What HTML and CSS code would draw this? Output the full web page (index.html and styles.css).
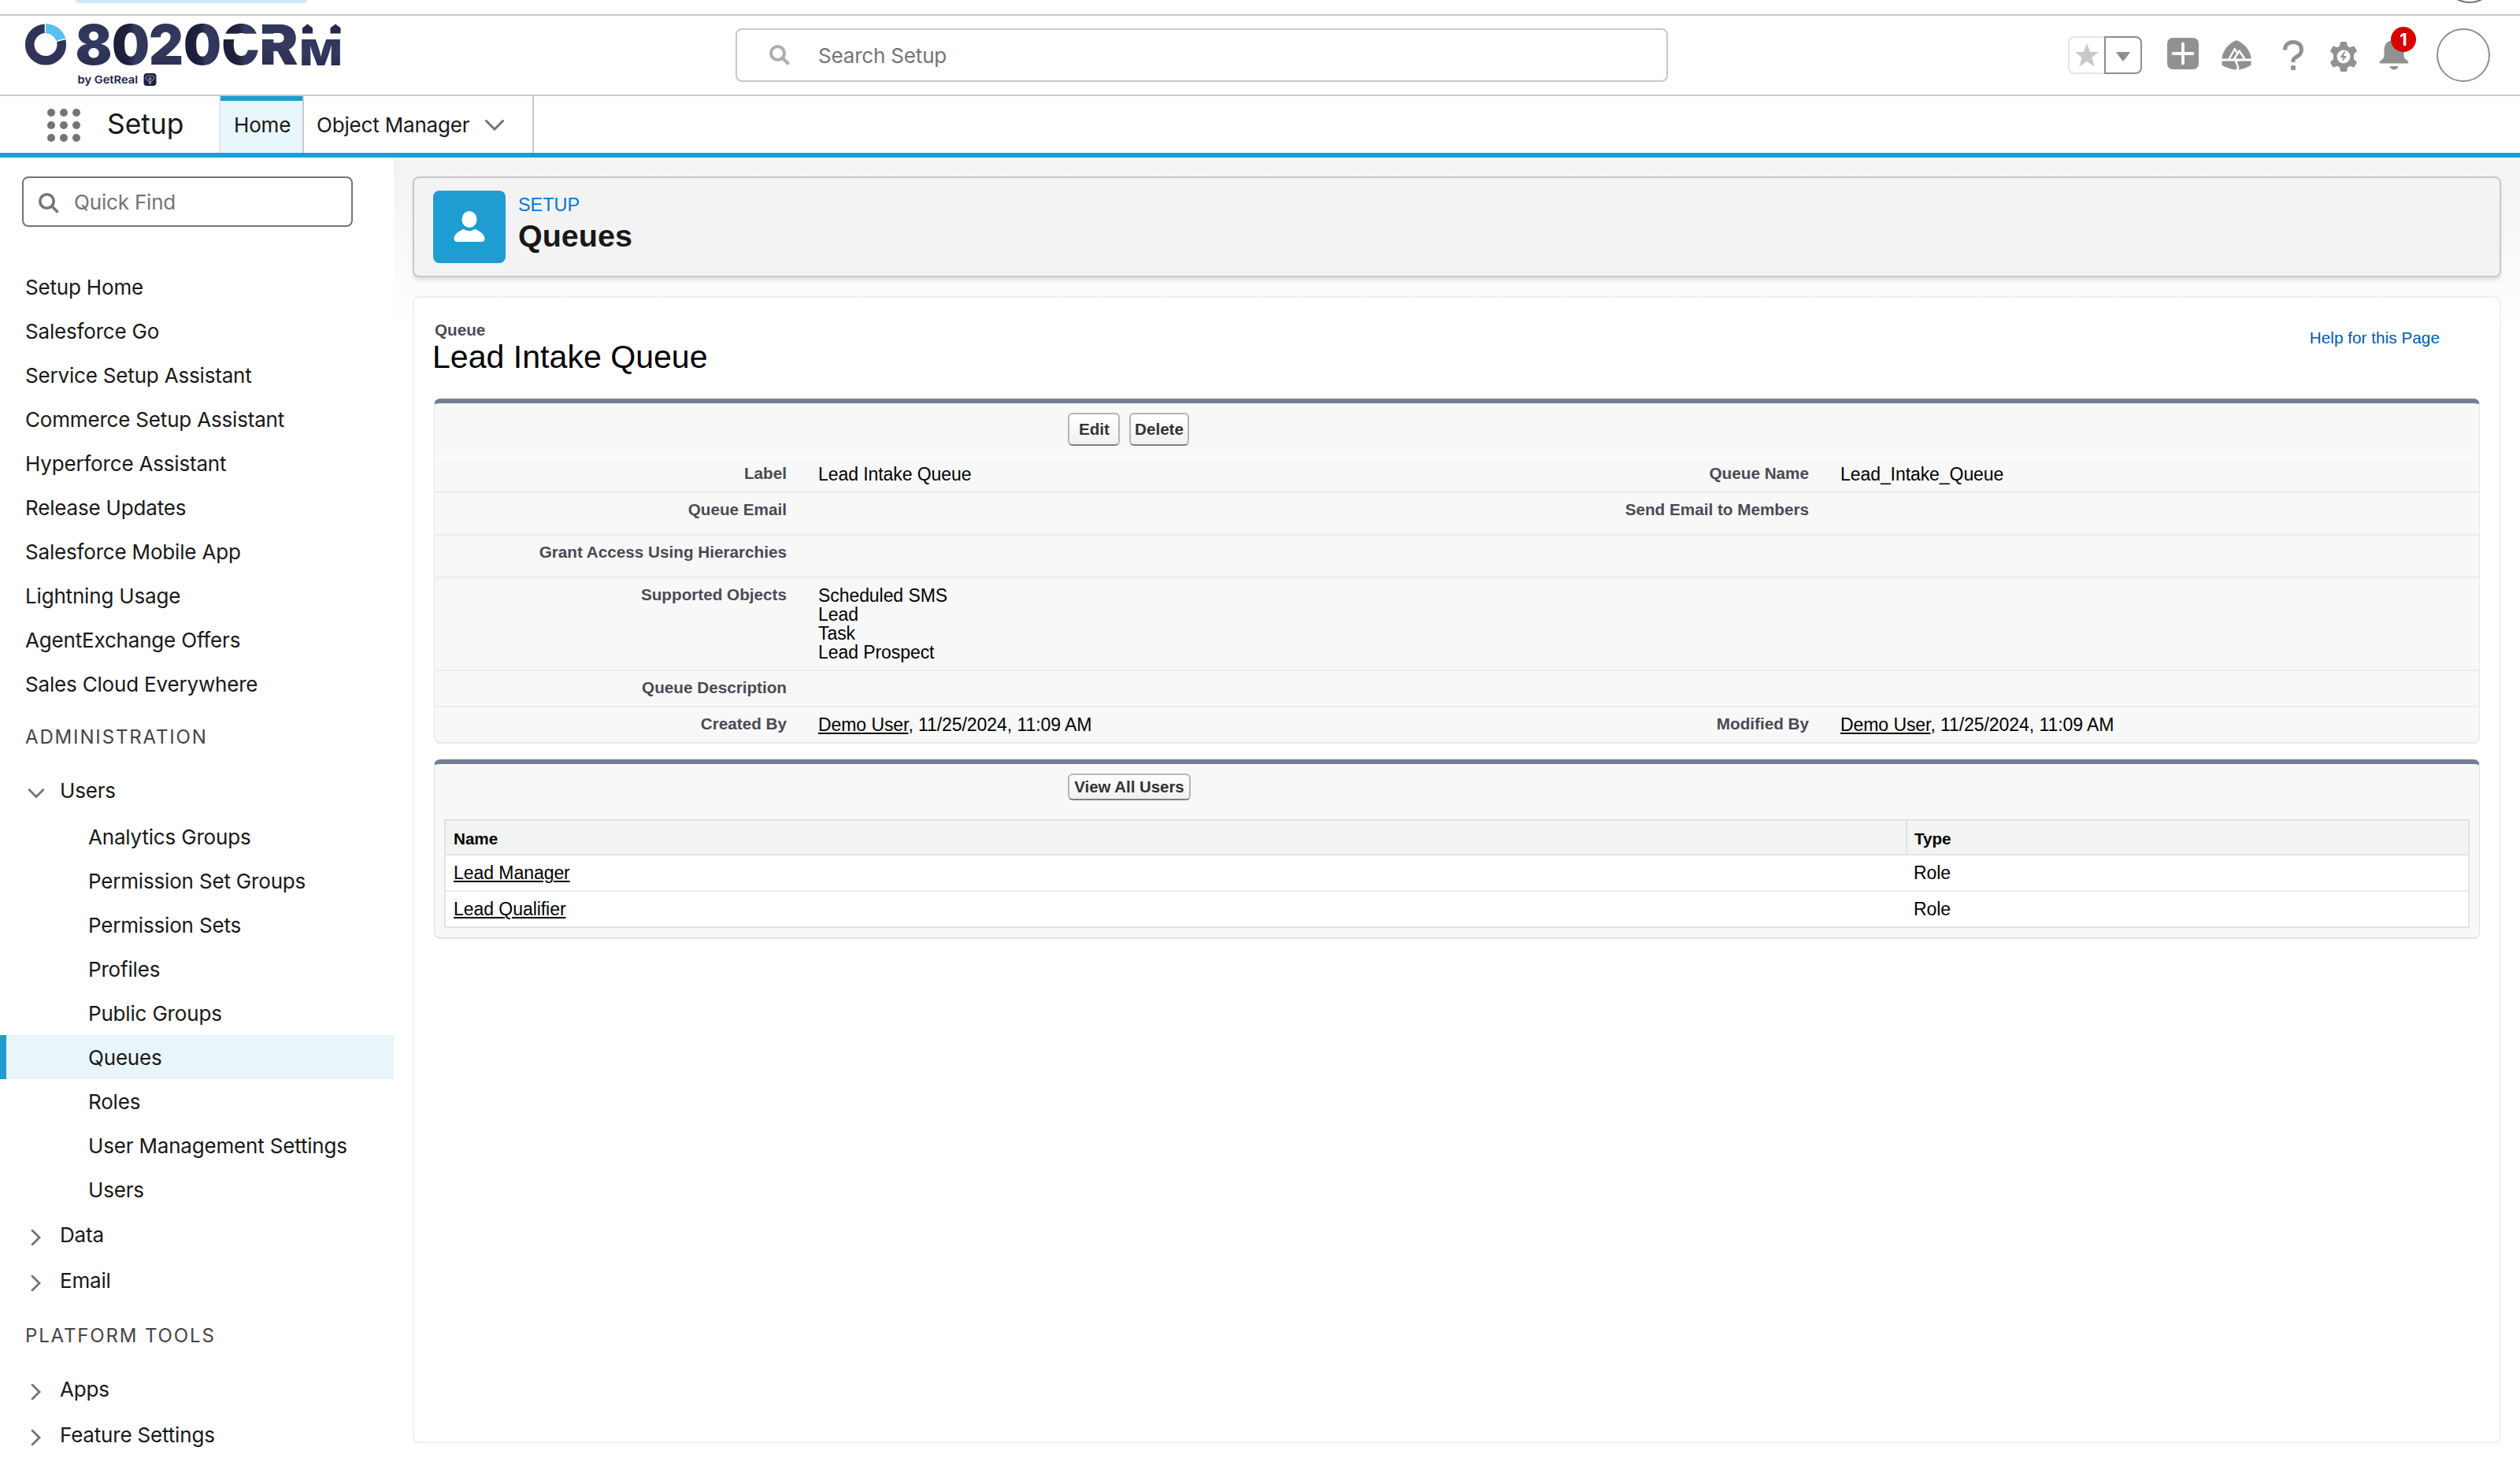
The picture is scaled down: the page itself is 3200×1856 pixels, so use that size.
FILE: index.html
```html
<!DOCTYPE html>
<html lang="en">
<head>
	<meta charset="UTF-8">
	<meta name="viewport" content="width=device-width, initial-scale=1.0">
	<title>Queues | Setup</title>
	<link rel="stylesheet" href="styles.css">
</head>
<body>
	<div class="topstrip">
		<div class="strip-tab"></div>
		<div class="strip-circle"></div>
	</div>

	<header class="global-header">
		<svg class="logo" width="420" height="92" viewBox="20 24 420 92">
			<defs>
				<linearGradient id="navy" x1="0" y1="0" x2="0" y2="1">
					<stop offset="0" stop-color="#2d3256"/>
					<stop offset="0.5" stop-color="#343a60"/>
					<stop offset="1" stop-color="#252946"/>
				</linearGradient>
				<linearGradient id="fold" x1="0" y1="0" x2="1" y2="0">
					<stop offset="0" stop-color="#191d33"/>
					<stop offset="0.45" stop-color="#1f2340"/>
					<stop offset="0.6" stop-color="#343a60"/>
					<stop offset="1" stop-color="#2f3459"/>
				</linearGradient>
			</defs>
			<circle cx="58" cy="56.5" r="20.3" fill="none" stroke="#2f3458" stroke-width="11.6"/>
			<path d="M58 30.4A26.1 26.1 0 0 1 83.2 49.7L72 52.7A14.5 14.5 0 0 0 58 42Z" fill="#56c1f0"/>
			<path d="M57.4 29v14M71 52.6l13.500-3.600" stroke="#fff" stroke-width="1.400"/>
			<g class="logo-text">
				<text x="95.500" y="82.300" textLength="47" lengthAdjust="spacingAndGlyphs" fill="url(#navy)">8</text>
				<text x="142" y="82.300" textLength="48" lengthAdjust="spacingAndGlyphs" fill="url(#fold)">0</text>
				<text x="189" y="82.300" textLength="44" lengthAdjust="spacingAndGlyphs" fill="url(#navy)">2</text>
				<text x="233" y="82.300" textLength="48" lengthAdjust="spacingAndGlyphs" fill="url(#fold)">0</text>
				<text x="281.500" y="82.300" textLength="48" lengthAdjust="spacingAndGlyphs" fill="url(#fold)">C</text>
				<text x="329.500" y="82.300" textLength="49" lengthAdjust="spacingAndGlyphs" fill="url(#navy)">R</text>
			</g>
			<text class="logo-m" x="380.500" y="82.500" textLength="54" lengthAdjust="spacingAndGlyphs" fill="url(#navy)">M</text>
			<path d="M384 42.500v-7l6.500-5 6.500 5v7zM419.500 42.500v-7l6.500-5 6.500 5v7z" fill="#252a49"/>
			<path d="M282 42.800h47v7.200h-47zM332 42.800h18v7.200h-18z" fill="#fff"/>
			<text class="logo-by" x="98.500" y="106" textLength="76.500" lengthAdjust="spacingAndGlyphs">by GetReal</text>
			<rect x="182.500" y="93" width="16" height="16" rx="4" fill="#1d2140"/>
			<path d="M186 97c2-2 4-1 4.500 0 .5-1 2.500-2 4.500 0s0 5-2 5l-2.500 5-2.500-5c-2 0-4-3-2-5zM190.500 98v8M188 100h5" fill="none" stroke="#c3c6d6" stroke-width="0.800"/>
		</svg>

		<div class="global-search">
			<svg width="26" height="26" viewBox="0 0 26 26"><circle cx="10.500" cy="10.500" r="8.500"/><path d="M16.500 16.500l8 8"/></svg>
			<span>Search Setup</span>
		</div>

		<div class="actions">
			<div class="favorites">
				<div class="star"><svg width="30" height="30" viewBox="0 0 30 30"><path d="M15 0l4.200 11H30l-8.600 7 3.200 11.500L15 22.800l-9.600 6.700L8.600 18 0 11h10.800z" fill="#c9c9c9"/></svg></div>
				<div class="caret"><svg width="18" height="12" viewBox="0 0 18 12"><path d="M1 0h16q1 0 .5 1L9.800 11q-.8 1-1.600 0L.5 1Q0 0 1 0z" fill="#8e8e8e"/></svg></div>
			</div>
			<svg class="ico-add" width="40" height="40" viewBox="0 0 40 40">
				<rect width="40" height="40" rx="7" fill="#919191"/>
				<path d="M20 7.500v25M7.500 20h25" stroke="#fff" stroke-width="3.800" stroke-linecap="round"/>
			</svg>
			<svg class="ico-trail" width="38" height="38" viewBox="0 0 38 38">
				<path d="M19 0c8 3 18 12 18.500 23.500H.5C1 12 11 3 19 0z" fill="#919191"/>
				<path d="M.5 26.500h17c-1.500 3.500 4 4.500 1.500 11C11 37 4 34 .5 31.500zM20.500 26.500h17v5c-4 3-9 5-16 6 2.500-5-2.500-7-1-11z" fill="#919191"/>
				<path d="M9.500 24l7.300-13 3.200 5.500M16 24l6.500-10.500L29.500 24" fill="none" stroke="#fff" stroke-width="2.400" stroke-linejoin="round"/>
			</svg>
			<svg class="ico-help" width="26" height="38" viewBox="0 0 26 38">
				<path d="M2.500 12.500C2.500 6 7 2.500 13 2.500S23.500 6 23.500 12s-4 8-7.500 10-3 3-3 6" fill="none" stroke="#919191" stroke-width="5"/>
				<rect x="10" y="32" width="6" height="6" rx="1.500" fill="#919191"/>
			</svg>
			<svg class="ico-gear" width="34" height="38" viewBox="0 0 34 38">
				<path d="M14.500 0h5q1.500 0 1.800 1.500l.7 4 3 1.700 3.800-1.400q1.500-.5 2.200.8l2.500 4.200q.8 1.300-.4 2.300l-3.100 2.700v6.400l3.100 2.700q1.200 1 .4 2.300L31 31.400q-.7 1.300-2.200.8L25 30.800l-3 1.700-.7 4Q21 38 19.500 38h-5q-1.500 0-1.800-1.500l-.7-4-3-1.700-3.800 1.400q-1.500.5-2.200-.8L.5 27.200q-.8-1.300.4-2.300L4 22.200v-6.400L.9 13.100q-1.200-1-.4-2.300L3 6.600q.7-1.300 2.200-.8L9 7.200l3-1.700.7-4Q13 0 14.500 0z" fill="#919191"/>
				<circle cx="17" cy="19" r="8.500" fill="#fff"/>
				<path d="M18 12l-5.500 8h4l-1.500 6 6-8h-4.200l2.700-6z" fill="#919191"/>
			</svg>
			<div class="bell">
				<svg width="38" height="38" viewBox="0 0 38 38">
					<path d="M19 0c8 0 12.500 5 12.500 12.500v5c0 5 1.500 6.500 5 9 1.500 1.200 1 3-.5 3H2c-1.500 0-2-1.800-.5-3 3.500-2.500 5-4 5-9v-5C6.500 5 11 0 19 0zM14.500 33h9c.5 0 1 .5.7 1-1.500 4.500-8.900 4.500-10.400 0-.3-.5.2-1 .7-1z" fill="#919191"/>
				</svg>
				<span class="badge">1</span>
			</div>
			<div class="avatar"></div>
		</div>
	</header>

	<nav class="context-bar">
		<div class="waffle"><i></i><i></i><i></i><i></i><i></i><i></i><i></i><i></i><i></i></div>
		<div class="app-name">Setup</div>
		<a class="tab active">Home</a>
		<a class="tab menu">Object Manager
			<svg width="24" height="14" viewBox="0 0 24 14"><path d="M1.500 1.500L12 12 22.500 1.500"/></svg>
		</a>
	</nav>

	<div class="page">
		<aside class="sidebar">
			<div class="quick-find">
				<svg width="26" height="26" viewBox="0 0 26 26"><circle cx="10.500" cy="10.500" r="8.700"/><path d="M16.500 16.500l8 8"/></svg>
				<span>Quick Find</span>
			</div>
			<ul class="links">
				<li>Setup Home</li>
				<li>Salesforce Go</li>
				<li>Service Setup Assistant</li>
				<li>Commerce Setup Assistant</li>
				<li>Hyperforce Assistant</li>
				<li>Release Updates</li>
				<li>Salesforce Mobile App</li>
				<li>Lightning Usage</li>
				<li>AgentExchange Offers</li>
				<li>Sales Cloud Everywhere</li>
			</ul>
			<h3 class="section">ADMINISTRATION</h3>
			<div class="group open"><svg width="20" height="20" viewBox="0 0 20 20"><path d="M1 5.500l9 9 9-9"/></svg>Users</div>
			<ul class="links sub">
				<li>Analytics Groups</li>
				<li>Permission Set Groups</li>
				<li>Permission Sets</li>
				<li>Profiles</li>
				<li>Public Groups</li>
				<li class="selected">Queues</li>
				<li>Roles</li>
				<li>User Management Settings</li>
				<li>Users</li>
			</ul>
			<div class="group"><svg width="20" height="20" viewBox="0 0 20 20"><path d="M5 1l9 9-9 9"/></svg>Data</div>
			<div class="group"><svg width="20" height="20" viewBox="0 0 20 20"><path d="M5 1l9 9-9 9"/></svg>Email</div>
			<h3 class="section tools">PLATFORM TOOLS</h3>
			<div class="group"><svg width="20" height="20" viewBox="0 0 20 20"><path d="M5 1l9 9-9 9"/></svg>Apps</div>
			<div class="group"><svg width="20" height="20" viewBox="0 0 20 20"><path d="M5 1l9 9-9 9"/></svg>Feature Settings</div>
		</aside>

		<main class="main">
			<div class="page-header">
				<div class="page-icon">
					<svg width="40" height="40" viewBox="0 0 40 40"><ellipse cx="20" cy="10.500" rx="9.500" ry="10.500"/><path d="M13.500 23.200q6.500 4.300 13 0 .8-.5 1.800 0C35 26 39.500 30.500 39.500 35c0 2.500-1.500 4-4 4h-31c-2.500 0-4-1.500-4-4 0-4.500 4.500-9 11.200-11.800q1-.5 1.800 0z"/></svg>
				</div>
				<div>
					<div class="eyebrow">SETUP</div>
					<h1>Queues</h1>
				</div>
			</div>

			<div class="content">
				<div class="title-row">
					<div>
						<div class="type">Queue</div>
						<h2>Lead Intake Queue</h2>
					</div>
					<a class="help">Help for this Page</a>
				</div>

				<section class="panel detail">
					<div class="buttons">
						<button class="btn edit">Edit</button>
						<button class="btn delete">Delete</button>
					</div>
					<div class="row">
						<div class="label">Label</div><div class="value">Lead Intake Queue</div>
						<div class="label">Queue Name</div><div class="value">Lead_Intake_Queue</div>
					</div>
					<div class="row tall">
						<div class="label">Queue Email</div><div class="value"></div>
						<div class="label">Send Email to Members</div><div class="value"></div>
					</div>
					<div class="row tall">
						<div class="label">Grant Access Using Hierarchies</div><div class="value"></div>
					</div>
					<div class="row">
						<div class="label">Supported Objects</div>
						<div class="value">Scheduled SMS<br>Lead<br>Task<br>Lead Prospect</div>
					</div>
					<div class="row">
						<div class="label">Queue Description</div><div class="value"></div>
					</div>
					<div class="row">
						<div class="label">Created By</div><div class="value"><a>Demo User</a>, 11/25/2024, 11:09 AM</div>
						<div class="label">Modified By</div><div class="value"><a>Demo User</a>, 11/25/2024, 11:09 AM</div>
					</div>
				</section>

				<section class="panel related">
					<div class="buttons">
						<button class="btn view">View All Users</button>
					</div>
					<table>
						<thead>
							<tr><th class="name">Name</th><th>Type</th></tr>
						</thead>
						<tbody>
							<tr><td><a>Lead Manager</a></td><td class="role">Role</td></tr>
							<tr><td><a>Lead Qualifier</a></td><td class="role">Role</td></tr>
						</tbody>
					</table>
				</section>
			</div>
		</main>
	</div>
</body>
</html>
```
FILE: styles.css
```css
*{
	box-sizing:border-box;
}
body{
	margin:0;
	width:3200px;
	height:1856px;
	overflow:hidden;
	display:flex;
	flex-direction:column;
	background:#fff;
	color:#181818;
	font:26px/1.5 Inter,"Liberation Sans",sans-serif;
	letter-spacing:-0.18px;
}
ul,h1,h2,h3{
	margin:0;
	padding:0;
	list-style:none;
	font-weight:400;
}
svg{
	display:block;
	flex:none;
}

/* bottom edge of the browser toolbar */
.topstrip{
	flex:none;
	height:20px;
	display:flex;
	justify-content:space-between;
	align-items:flex-start;
	padding:0 30px 0 96px;
	border-bottom:2px solid #c9c9c9;
	overflow:hidden;
}
.strip-tab{
	width:294px;
	height:4px;
	background:#cfe9fe;
	border-radius:0 0 4px 4px;
}
.strip-circle{
	width:68px;
	height:68px;
	margin-top:-64px;
	border:2px solid #747474;
	border-radius:50%;
}

/* global header */
.global-header{
	flex:none;
	height:102px;
	display:flex;
	align-items:flex-start;
	padding:0 38px 0 20px;
	border-bottom:2px solid #c9c9c9;
}
.logo{
	margin-top:4px;
	overflow:visible;
}
.logo-text,.logo-m{
	font-family:Inter,sans-serif;
	font-weight:900;
	font-size:70px;
	letter-spacing:0;
}
.logo-m{
	font-size:45px;
}
.logo-by{
	font-family:Inter,sans-serif;
	font-weight:600;
	font-size:13.5px;
	fill:#1d2140;
	letter-spacing:0;
}
.global-search{
	width:1184px;
	height:68px;
	margin:16px 0 0 494px;
	padding-left:41px;
	display:flex;
	align-items:center;
	border:2px solid #c9c9c9;
	border-radius:8px;
	color:#747474;
}
.global-search svg{
	margin-right:36px;
	fill:none;
	stroke:#aeaeae;
	stroke-width:4;
}
.actions{
	flex:1;
	display:flex;
	justify-content:flex-end;
	align-items:flex-start;
}
.favorites{
	display:flex;
	margin:26px 32px 0 0;
}
.star,.caret{
	height:48px;
	display:flex;
	align-items:center;
	justify-content:center;
}
.star{
	width:46px;
	border:2px solid #e5e5e5;
	border-right:0;
	border-radius:8px 0 0 8px;
}
.caret{
	width:48px;
	padding-top:3px;
	border:2px solid #8e8e8e;
	border-radius:0 8px 8px 0;
}
.ico-add{
	margin:28px 29px 0 0;
}
.ico-trail{
	margin:31px 40px 0 0;
}
.ico-help{
	margin:31px 34px 0 0;
}
.ico-gear{
	margin:33px 28px 0 0;
}
.bell{
	position:relative;
	margin:31px 35px 0 0;
}
.badge{
	position:absolute;
	left:15px;
	top:-17px;
	width:32px;
	height:32px;
	border-radius:50%;
	background:#d80000;
	color:#fff;
	font-size:22px;
	font-weight:700;
	line-height:33px;
	text-align:center;
}
.avatar{
	width:68px;
	height:68px;
	margin-top:16px;
	border:2px solid #8e8e8e;
	border-radius:50%;
}

/* app navigation */
.context-bar{
	flex:none;
	height:78px;
	display:flex;
	align-items:stretch;
	border-bottom:6px solid #1f9dd3;
}
.waffle{
	display:grid;
	grid-template-columns:repeat(3,10px);
	gap:6px;
	width:42px;
	height:42px;
	margin:16px 34px 0 60px;
}
.waffle i{
	width:10px;
	height:10px;
	border-radius:50%;
	background:#747474;
}
.app-name{
	width:142px;
	font-size:35.3px;
	line-height:71px;
	letter-spacing:0;
}
.tab{
	display:flex;
	align-items:center;
	line-height:30px;
	padding:2px 16px 0;
}
.tab.active{
	width:108px;
	padding:2px 0 0 17px;
	background:#e8f5fb;
	border-left:2px solid #e5e5e5;
	border-right:2px solid #c9c9c9;
	box-shadow:inset 0 6px 0 #1f9dd3;
}
.tab.menu{
	width:292px;
	border-right:2px solid #c9c9c9;
}
.tab.menu svg{
	margin-left:20px;
	fill:none;
	stroke:#747474;
	stroke-width:3;
	stroke-linecap:round;
}

/* page */
.page{
	flex:1;
	display:grid;
	grid-template-columns:500px 1fr;
	min-height:0;
}
.sidebar{
	padding-top:24px;
}
.quick-find{
	display:flex;
	align-items:center;
	width:420px;
	height:64px;
	margin:0 0 48px 28px;
	padding-left:19px;
	border:2px solid #747474;
	border-radius:8px;
	color:#747474;
}
.quick-find svg{
	margin:4px 19px 0 0;
	fill:none;
	stroke:#747474;
	stroke-width:3.6;
}
.links li{
	height:56px;
	line-height:58px;
	padding-left:32px;
}
.links.sub li{
	padding-left:112px;
}
.links.sub .selected{
	padding-left:104px;
	border-left:8px solid #1f9dd3;
	background:#e8f5fb;
}
.section{
	height:78px;
	line-height:80px;
	padding-left:32px;
	font-size:24px;
	letter-spacing:1.85px;
	color:#444;
}
.section.tools{
	height:80px;
	line-height:83px;
}
.group{
	display:flex;
	align-items:center;
	height:58px;
	padding-left:36px;
}
.group.open{
	margin-bottom:2px;
}
.group svg{
	margin:8px 20px 0 0;
	fill:none;
	stroke:#747474;
	stroke-width:2.8;
	stroke-linecap:round;
}
.main{
	padding:24px 24px 24px;
	display:flex;
	flex-direction:column;
	background:linear-gradient(#f3f3f3,#fff 220px);
	font-family:"Liberation Sans",Arial,sans-serif;
	letter-spacing:0;
}
.page-header{
	flex:none;
	display:flex;
	height:128px;
	padding:16px 24px;
	border:2px solid #c9c9c9;
	border-radius:8px;
	background:#f3f3f3;
	box-shadow:0 4px 4px rgba(0,0,0,.1);
}
.page-icon{
	display:flex;
	align-items:center;
	justify-content:center;
	width:92px;
	height:92px;
	margin-right:16px;
	border-radius:8px;
	background:#1f9dd3;
	fill:#fff;
}
.eyebrow{
	margin:4px 0 1px;
	font-size:23.4px;
	line-height:28px;
	color:#0176d3;
}
h1{
	font-size:39.5px;
	font-weight:700;
	line-height:48px;
}
.content{
	height:1456px;
	margin-top:24px;
	padding:28px 25px 0;
	border:2px solid #f0f0f0;
	border-radius:8px;
	background:#fff;
	color:#000;
	font-size:23px;
	line-height:24px;
}
.title-row{
	display:flex;
	justify-content:space-between;
	margin-bottom:31px;
}
.type{
	margin:1px 0 0 1px;
	font-size:20.7px;
	font-weight:700;
	color:#4a4a56;
}
h2{
	margin-left:-2px;
	font-size:41.1px;
	line-height:44px;
}
.help{
	margin:11px 51px 0 0;
	font-size:20.8px;
	color:#015ba7;
}
.panel{
	margin-bottom:20px;
	border:1px solid #e4e6e8;
	border-width:6px 1px 2px;
	border-top-color:#747e96;
	border-radius:8px;
	background:#f8f8f8;
}
.buttons{
	display:flex;
	gap:12px;
	padding-left:804px;
}
.detail .buttons{
	height:68px;
	padding-top:12px;
	border-bottom:2px solid #fff;
}
.btn{
	padding:0;
	border:2px solid #b5b5b5;
	border-bottom-color:#7f7f7f;
	border-radius:6px;
	background:linear-gradient(#fff,#f0f0f0);
	color:#333;
	font:bold 20.6px "Liberation Sans",Arial,sans-serif;
}
.edit{
	width:66px;
	height:42px;
	padding-left:1px;
}
.delete{
	width:76px;
	height:42px;
}
.view{
	width:156px;
	height:34px;
	font-size:20.4px;
}
.row{
	display:grid;
	grid-template-columns:448px 850px 448px 850px;
	min-height:46px;
	padding-bottom:10px;
	border-bottom:2px solid #ececec;
}
.row:last-child{
	min-height:44px;
	padding-bottom:0;
	border-bottom:0;
}
.row.tall{
	min-height:54px;
}
.label{
	padding:9px 1px 0 0;
	text-align:right;
	font-size:20.7px;
	font-weight:700;
	color:#4a4a56;
}
.value{
	padding:10px 0 0 39px;
	letter-spacing:-0.07px;
}
.value a,td a{
	text-decoration:underline;
	text-decoration-thickness:2px;
	text-underline-offset:2px;
}
.related{
	height:228px;
	padding:12px 12px 0;
	border-color:#747e96 #dfe3e6 #dfe3e6;
}
.related .buttons{
	height:58px;
	padding-left:792px;
	align-items:flex-start;
}
table{
	width:2572px;
	table-layout:fixed;
	border-spacing:0;
	border:2px solid #dfe3e6;
	background:#fff;
}
th,td{
	height:44px;
	padding:10px 10px 0;
	text-align:left;
	vertical-align:top;
	letter-spacing:-0.05px;
}
th{
	padding-top:11px;
	font-size:20.7px;
	background:#f2f4f3;
	border-bottom:2px solid #dfe3e6;
}
th.name{
	width:1856px;
	border-right:2px solid #dfe3e6;
}
th:last-child{
	padding-left:9px;
}
td.role{
	padding-left:8px;
}
tbody tr:first-child td{
	height:46px;
	border-bottom:2px solid #ececec;
}
```
